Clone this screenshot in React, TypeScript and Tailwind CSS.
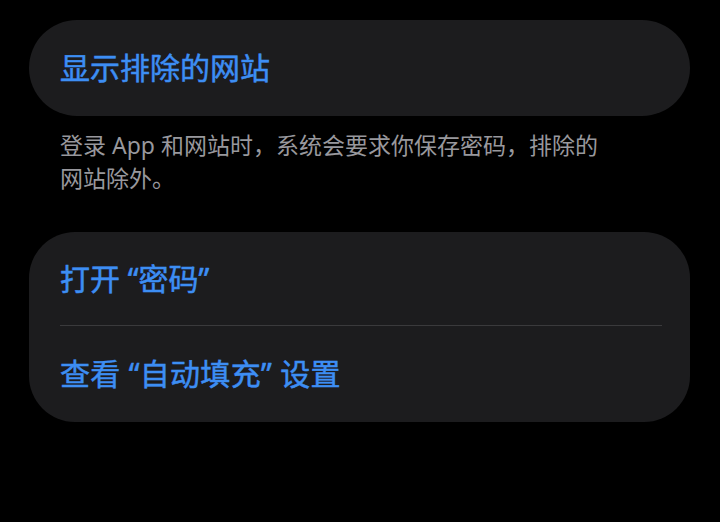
export default function App() {
  const font = { fontFamily: '"Noto Sans", "Noto Sans CJK SC", sans-serif' };
  return (
    <div className="w-[720px] h-[522px] bg-black pl-[29px] pr-[30px] pt-[20px]" style={font}>
      <div className="h-[96px] rounded-[48px] bg-[#1c1c1e] flex items-center pl-[31px]">
        <span className="text-[30px] leading-none text-[#3d8ef4] [-webkit-text-stroke:0.5px_#3d8ef4]">显示排除的网站</span>
      </div>

      <p className="mt-[13px] pl-[31px] w-[590px] text-[23px] leading-[33px] text-[#98989d]">
        登录 App 和网站时，系统会要求你保存密码，排除的网站除外。
      </p>

      <div className="mt-[37px] rounded-[46px] bg-[#1c1c1e] pl-[31px]">
        <div className="h-[94px] flex items-center border-b border-[#3a3a3c] mr-[28px]">
          <span className="text-[30px] leading-none text-[#3d8ef4] [-webkit-text-stroke:0.5px_#3d8ef4]">打开 “密码”</span>
        </div>
        <div className="h-[96px] flex items-center">
          <span className="text-[30px] leading-none tracking-[0.3px] text-[#3d8ef4] [-webkit-text-stroke:0.5px_#3d8ef4]">查看 “自动填充” 设置</span>
        </div>
      </div>
    </div>
  );
}
